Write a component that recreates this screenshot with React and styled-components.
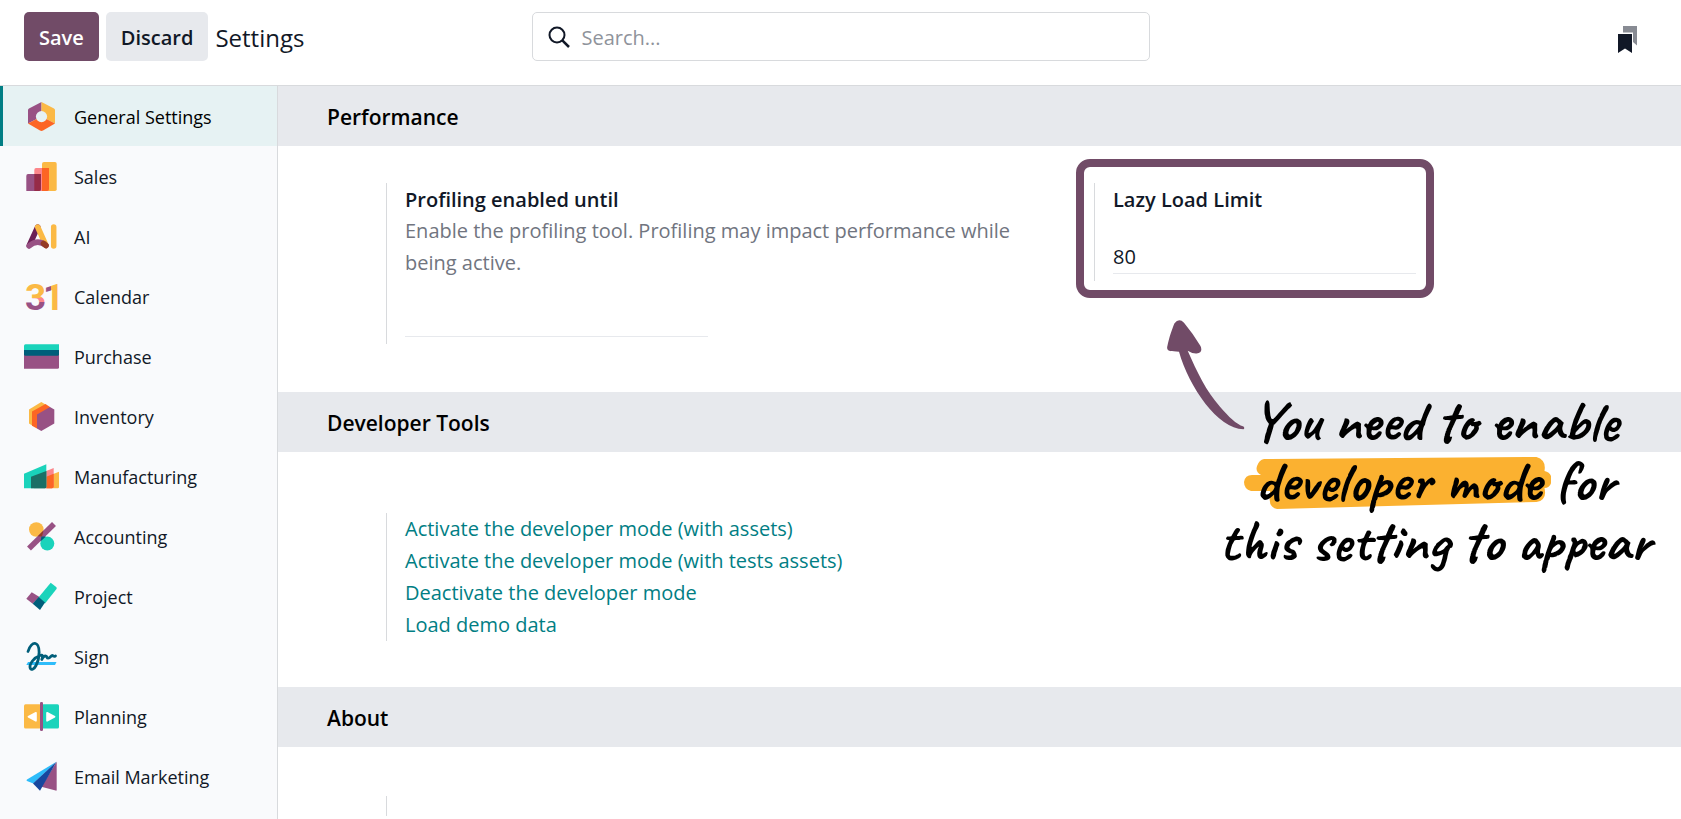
import React from 'react';
import styled, { createGlobalStyle } from 'styled-components';

const GlobalStyle = createGlobalStyle`
  * {
    box-sizing: border-box;
  }
  body {
    margin: 0;
    background: #fff;
    color: #111827;
    font-family: "Segoe UI", "Open Sans", "Noto Sans", sans-serif;
    font-size: 20px;
    line-height: 32px;
  }
`;

const Page = styled.div`
  display: flex;
  flex-direction: column;
  height: 100vh;
  overflow: hidden;
`;

const ControlPanel = styled.header`
  display: grid;
  grid-template-columns: 1fr minmax(0, 618px) 1fr;
  align-items: start;
  flex: none;
  padding: 12px 24px 24px;
  border-bottom: 1px solid #d8dadd;
`;

const Actions = styled.div`
  display: flex;
  align-items: center;
  gap: 7px;
`;

const Button = styled.button`
  height: 49px;
  padding: 2px 15px 0;
  border: 0;
  border-radius: 5px;
  background: ${({ $primary }) => ($primary ? '#714b67' : '#e7e9ed')};
  color: ${({ $primary }) => ($primary ? '#fff' : '#111827')};
  font-family: inherit;
  font-size: 20px;
  font-weight: 600;
`;

const Title = styled.h1`
  margin: 0;
  padding-top: 2px;
  font-size: 24px;
  font-weight: 400;
`;

const SearchBox = styled.label`
  display: flex;
  align-items: center;
  gap: 12px;
  height: 49px;
  padding: 0 15px;
  border: 1px solid #d8dadd;
  border-radius: 5px;
`;

const SearchInput = styled.input`
  flex: 1;
  min-width: 0;
  padding: 2px 0 0;
  border: 0;
  outline: 0;
  background: transparent;
  color: inherit;
  font-family: inherit;
  font-size: 20px;
  &::placeholder {
    color: #8f939b;
    opacity: 1;
  }
`;

const Bookmark = styled.button`
  justify-self: end;
  display: flex;
  padding: 14px 20px 0;
  border: 0;
  background: transparent;
`;

const Body = styled.div`
  display: flex;
  flex: 1;
  min-height: 0;
`;

const Sidebar = styled.nav`
  flex: none;
  width: 278px;
  background: #f9fafc;
  border-right: 1px solid #d8dadd;
`;

const Tab = styled.a`
  display: flex;
  align-items: center;
  gap: 15px;
  height: 60px;
  padding-left: 21px;
  border-left: 3px solid ${({ $active }) => ($active ? '#017e84' : 'transparent')};
  background: ${({ $active }) => ($active ? '#e6f2f3' : 'transparent')};
  color: ${({ $active }) => ($active ? '#000' : '#111827')};
  font-size: 18px;
  text-decoration: none;
`;

const TabName = styled.span`
  padding-top: 2px;
`;

const AppIcon = styled.svg`
  flex: none;
  width: 35px;
  height: 36px;
  overflow: visible;
`;

const Main = styled.main`
  flex: 1;
  min-width: 0;
`;

const SectionTitle = styled.h2`
  margin: 0;
  padding: 15px 49px 13px;
  background: #e7e9ed;
  color: #000;
  font-size: 21px;
  font-weight: 600;
`;

const Settings = styled.div`
  display: grid;
  grid-template-columns: minmax(0, 708px) 1fr;
  align-items: start;
  padding: ${({ $top }) => $top}px 0 ${({ $bottom }) => $bottom}px 108px;
`;

const Setting = styled.div`
  position: relative;
  min-height: 20px;
  margin-right: 36px;
  padding: 0 20px 0 18px;
  border-left: 1px solid #d8dadd;
`;

const FieldLabel = styled.label`
  display: block;
  padding-top: 1px;
  font-weight: 600;
  line-height: 31px;
`;

const Help = styled.p`
  margin: 0;
  color: #71757f;
`;

const Field = styled.input`
  display: block;
  width: 303px;
  height: 35px;
  margin: ${({ $gap }) => $gap}px 0 7px;
  padding: 0;
  border: 0;
  border-bottom: 1px solid #e7e9ed;
  outline: 0;
  background: transparent;
  color: inherit;
  font-family: inherit;
  font-size: 20px;
`;

const Link = styled.a`
  display: block;
  color: #017e84;
  text-decoration: none;
`;

/* annotation drawn over the page */
const Frame = styled.div`
  position: absolute;
  top: -24px;
  left: -19px;
  width: 358px;
  height: 139px;
  border: 8px solid #714b67;
  border-radius: 14px;
  pointer-events: none;
`;

const Arrow = styled.svg`
  position: absolute;
  top: 137px;
  left: 71px;
  width: 80px;
  height: 111px;
`;

const Note = styled.p`
  position: absolute;
  top: 208px;
  left: 100px;
  z-index: 1;
  width: 480px;
  margin: 0;
  color: #000;
  font-family: Caveat, cursive;
  font-size: 58px;
  font-weight: 700;
  line-height: 60px;
  text-align: center;
  white-space: nowrap;
`;

const Marked = styled.mark`
  position: relative;
  background: none;
  color: inherit;
`;

const Marker = styled.svg`
  position: absolute;
  top: 13px;
  left: -12px;
  z-index: -1;
  width: calc(100% + 22px);
  height: 52px;
`;

const icons = {
  general: (
    <>
      <path d="M17.5 4 5 10.5Q4 11 4 12v13.500L17.5 18.600z" fill="#985184" />
      <path d="M17.500 4 30 10.500Q31 11 31 12v13.500L17.500 18.600z" fill="#fbb945" />
      <path d="M17.500 18.600 31 25.500 19 32.500Q17.500 33.300 16 32.500L4 25.500z" fill="#fc6524" />
      <circle cx="17.500" cy="18.600" r="5.600" fill="#e6f2f3" />
    </>
  ),
  sales: (
    <>
      <path d="M20 4h11q1.700 0 1.700 1.700V31.300Q32.700 33 31 33H18V6q0-2 2-2z" fill="#fbb945" />
      <path d="M12 10h13v21q0 2-2 2H10.300V12q0-2 1.700-2z" fill="#fc868b" />
      <path d="M18 10h7v21q0 2-2 2H18z" fill="#fc6524" />
      <path d="M4 16h13v15q0 2-2 2H2.300V18q0-2 1.700-2z" fill="#985184" />
      <path d="M10.300 16H17v15q0 2-2 2h-4.700z" fill="#962b48" />
    </>
  ),
  ai: (
    <g fill="none" strokeLinecap="round" strokeWidth="5.500">
      <path d="M13.700 9 5.500 27" stroke="#6b1f55" />
      <path d="M13.700 9 22 27.500" stroke="#fbb945" />
      <path d="M5 28Q13.500 20.500 22 27.500" stroke="#985184" />
      <path d="M19.500 25.500 22 27.500" stroke="#953b25" />
      <path d="M29.700 9v19" stroke="#fbb945" />
    </g>
  ),
  calendar: (
    <>
      <defs>
        <linearGradient id="three" x1="0" y1="0" x2="0" y2="1">
          <stop offset="0.520" stopColor="#fbb945" />
          <stop offset="0.520" stopColor="#fc868b" />
          <stop offset="0.600" stopColor="#fc868b" />
          <stop offset="0.600" stopColor="#985184" />
        </linearGradient>
        <linearGradient id="one" x1="0" y1="0" x2="1" y2="0">
          <stop offset="0.380" stopColor="#985184" />
          <stop offset="0.380" stopColor="#fbb945" />
        </linearGradient>
      </defs>
      <text x="1" y="32" fontFamily="Roboto, sans-serif" fontSize="37" fontWeight="700" fill="url(#three)">3</text>
      <text x="19" y="32" fontFamily="Roboto, sans-serif" fontSize="37" fontWeight="700" fill="url(#one)">1</text>
    </>
  ),
  purchase: (
    <>
      <path d="M1.500 6.300H35V14H0V7.800Q0 6.300 1.500 6.300z" fill="#1ad3bb" />
      <path d="M0 14h35v15.200q0 1.500-1.500 1.500H0z" fill="#985184" />
      <path d="M0 12h35v4.200q0 1.500-1.500 1.500H1.500Q0 17.700 0 16.200z" fill="#005e7a" />
    </>
  ),
  inventory: (
    <>
      <path d="M17.300 4 21.500 6.500v22L9 28l-4-2.600V11.500z" fill="#fbb945" />
      <path d="M21.500 6 26 9v16L13 30.500l-5-2.700V13.500z" fill="#fc6524" />
      <path d="M26 9l4.300 2.500v14L17.300 33 13 30.500V16.500z" fill="#985184" />
    </>
  ),
  manufacturing: (
    <>
      <path d="M35 13.700V29q0 1.300-1.300 1.300H22.300v-11.500z" fill="#fbb945" />
      <path d="M29.700 10v18.500q0 1.800-1.800 1.800H10V18z" fill="#fc868b" />
      <path d="M29.700 15.800v12.700q0 1.800-1.800 1.800h-5.600V18.800z" fill="#fc6524" />
      <path d="M0 15.700 22.300 6.300v22.500q0 1.500-1.500 1.500H0z" fill="#1ad3bb" />
      <path d="M7 18.700 22.300 13v15.800q0 1.500-1.500 1.500H7z" fill="#1c6f66" />
    </>
  ),
  accounting: (
    <>
      <circle cx="12.300" cy="11.500" r="7.300" fill="#fbb945" />
      <circle cx="23.300" cy="25.600" r="7" fill="#1ad3bb" />
      <path d="M5 30.500 30 6" stroke="#985184" strokeWidth="5.600" />
      <path d="M13.800 18.200 18 18.400 19.600 12.500z" fill="#953b25" />
      <path d="M16.400 23.400 17.500 18.600 22 18.600z" fill="#005e7a" />
    </>
  ),
  project: (
    <>
      <path d="M7.700 14.300 15.500 19 8.700 25.700 2.300 20.700z" fill="#985184" />
      <path d="M26.700 4.700 32.200 9q1 1 .3 2L21 25.500l-6.500-6z" fill="#1ad3bb" />
      <path d="M14.700 19 21 24.500 16 32 8.700 25.700z" fill="#005e7a" />
    </>
  ),
  sign: (
    <>
      <path d="M4 24h28.500l-1.500 3H2.300z" fill="#2ebcfa" />
      <path
        d="M4 13.500C5.500 8 9 4.700 11.500 5.500c5 1.500 4.500 14.500.5 22-2 4-5 5-5.800 2.500C5 26 10 19.500 16 17.500c3-1.200 3 1 1.800 4 1-2.500 3-4 4.400-3.300 1.200.8.300 2 2 2 2.300 0 2.500-2.700 4.300-2.700 1.300.5 1 1.500 3 .5"
        fill="none"
        stroke="#005e7a"
        strokeWidth="2.800"
        strokeLinecap="round"
        strokeLinejoin="round"
      />
    </>
  ),
  planning: (
    <>
      <rect y="6.300" width="17" height="24.200" rx="1.500" fill="#fbb945" />
      <rect x="18" y="6.300" width="17" height="24.200" rx="1.500" fill="#1ad3bb" />
      <rect x="16" y="4" width="3" height="29" rx="1.300" fill="#985184" />
      <path d="M4 18 11.500 14q1.300-.5 1.300 1v7.500q0 1.500-1.300 1L4 19.500q-1-.7 0-1.500z" fill="#fff" />
      <path d="M31 18 23.500 14q-1.300-.5-1.300 1v7.500q0 1.500 1.300 1L31 19.500q1-.7 0-1.500z" fill="#fff" />
    </>
  ),
  email: (
    <>
      <path d="M32.500 3.700 9.300 25.500 3 23q-1-.6 0-1.400z" fill="#2ebcfa" />
      <path d="M32.700 3.700V32q0 .8-1 .6L17.300 28.700z" fill="#985184" />
      <path d="M32.500 3.700 16 32.700 9 25.400z" fill="#17479e" />
    </>
  ),
};

const tabs = [
  { name: 'General Settings', icon: 'general' },
  { name: 'Sales', icon: 'sales' },
  { name: 'AI', icon: 'ai' },
  { name: 'Calendar', icon: 'calendar' },
  { name: 'Purchase', icon: 'purchase' },
  { name: 'Inventory', icon: 'inventory' },
  { name: 'Manufacturing', icon: 'manufacturing' },
  { name: 'Accounting', icon: 'accounting' },
  { name: 'Project', icon: 'project' },
  { name: 'Sign', icon: 'sign' },
  { name: 'Planning', icon: 'planning' },
  { name: 'Email Marketing', icon: 'email' },
];

const developerLinks = [
  'Activate the developer mode (with assets)',
  'Activate the developer mode (with tests assets)',
  'Deactivate the developer mode',
  'Load demo data',
];

const App = () => {
  return (
    <Page>
      <GlobalStyle />
      <ControlPanel>
        <Actions>
          <Button $primary>Save</Button>
          <Button>Discard</Button>
          <Title>Settings</Title>
        </Actions>
        <SearchBox>
          <svg width="22" height="22" viewBox="0 0 22 22" fill="none" stroke="#111827" strokeWidth="2" aria-hidden="true">
            <circle cx="9" cy="9" r="7.500" />
            <path d="M14.300 14.300 21 21" strokeWidth="2.500" />
          </svg>
          <SearchInput type="search" placeholder="Search..." aria-label="Search" />
        </SearchBox>
        <Bookmark aria-label="Bookmarks">
          <svg width="19" height="27" viewBox="0 0 19 27" aria-hidden="true">
            <path d="M5 0h14v19.500L15 16V6.500H5z" fill="#888b93" />
            <path d="M0 8h14v19l-7-4.500L0 27z" fill="#111827" />
          </svg>
        </Bookmark>
      </ControlPanel>
      <Body>
        <Sidebar>
          {tabs.map((tab, i) => (
            <Tab key={tab.name} href={`#${tab.icon}`} $active={i === 0}>
              <AppIcon viewBox="0 0 35 36" aria-hidden="true">{icons[tab.icon]}</AppIcon>
              <TabName>{tab.name}</TabName>
            </Tab>
          ))}
        </Sidebar>
        <Main>
          <SectionTitle>Performance</SectionTitle>
          <Settings $top={37} $bottom={48}>
            <Setting>
              <FieldLabel htmlFor="profiling">Profiling enabled until</FieldLabel>
              <Help>Enable the profiling tool. Profiling may impact performance while being active.</Help>
              <Field id="profiling" type="text" $gap={23} />
            </Setting>
            <Setting>
              <FieldLabel htmlFor="limit">Lazy Load Limit</FieldLabel>
              <Field id="limit" type="text" defaultValue="80" $gap={24} />
              <Frame />
              <Arrow viewBox="0 0 80 111" fill="#714b67" aria-hidden="true">
                <path d="M8.500 3.200Q13-2.500 18 2.700 27 13.500 34.500 26q2.800 6.500-3.800 7.500-4.500.3-9-2.700C31 52 40 71 54 86.700 63 97 70 104 77.500 106.500q1.500 1.500 0 2.700C52 109 23 67 13 31.700 9 31 6 31.500 4 30.900 1 30.500.8 28 1.400 26 3 18 6 9 8.500 3.200z" />
              </Arrow>
              <Note>
                You need to enable<br />
                <Marked>
                  <Marker viewBox="0 0 307 52" preserveAspectRatio="none" aria-hidden="true">
                    <path d="M20 2 292 0q10 3 8 14 8 2 7 10-1 7-7 7 3 12-8 14L33 52q-9-2-7-13V34H7Q0 32 0 25q1-7 8-7h9q-6-3-4-9 2-6 7-7z" fill="#fbb130" />
                  </Marker>
                  developer mode
                </Marked>{' '}
                for<br />
                this setting to appear
              </Note>
            </Setting>
          </Settings>
          <SectionTitle>Developer Tools</SectionTitle>
          <Settings $top={61} $bottom={46}>
            <Setting>
              {developerLinks.map((link) => (
                <Link key={link} href="#developer">{link}</Link>
              ))}
            </Setting>
          </Settings>
          <SectionTitle>About</SectionTitle>
          <Settings $top={49} $bottom={48}>
            <Setting />
          </Settings>
        </Main>
      </Body>
    </Page>
  );
};

export default App;
